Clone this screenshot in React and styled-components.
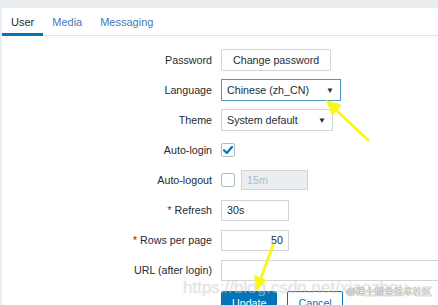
import { styled, createGlobalStyle } from "styled-components";

const GlobalStyle = createGlobalStyle`
  html, body {
    margin: 0;
    padding: 0;
    background: #ebeef0;
    overflow: hidden;
  }
  body {
    font-family: "Liberation Sans", Arial, sans-serif;
    font-size: 10.7px;
    color: #1f2c33;
  }
`;

const Page = styled.div`
  position: relative;
  width: 438px;
  height: 305px;
  padding: 8px 0 0 2px;
  box-sizing: border-box;
  overflow: hidden;
`;

const Panel = styled.div`
  background: #fff;
  height: 100%;
`;

const TabBar = styled.ul`
  display: flex;
  margin: 0;
  padding: 0;
  list-style: none;
  height: 28px;
  border-bottom: 1px solid #dfe4e7;
  box-sizing: border-box;
  font-size: 11px;
`;

const Tab = styled.li`
  display: flex;
  align-items: center;
  padding: 3px 9px 0;
  box-sizing: border-box;
  color: ${p => (p.$active ? "#1f2c33" : "#4579b8")};
  border-bottom: 3px solid ${p => (p.$active ? "#0275b8" : "transparent")};
  margin-bottom: -1px;
`;

const Form = styled.div`
  display: grid;
  grid-template-columns: 210px 1fr;
  grid-auto-rows: 30px;
  column-gap: 9px;
  align-items: center;
  padding-top: 9px;
`;

const Label = styled.div`
  text-align: right;
  white-space: nowrap;
`;

const Req = styled.span`
  color: #d40000;
  margin-right: 3px;
`;

const Field = styled.div`
  display: flex;
  align-items: center;
  gap: 6px;
  white-space: nowrap;
`;

const PlainButton = styled.button`
  height: 22px;
  padding: 0 11px;
  border: 1px solid #cfd5d8;
  border-radius: 2px;
  background: #fff;
  font: inherit;
  color: #1f2c33;
`;

const SelectBox = styled.div`
  display: flex;
  align-items: center;
  justify-content: space-between;
  width: ${p => p.$w}px;
  height: 22px;
  padding: 0 6px 0 5px;
  box-sizing: border-box;
  border: 1px solid ${p => (p.$focus ? "#4796c4" : "#cfd5d8")};
  background: #fff;
`;

const Caret = styled.span`
  font-size: 8px;
  color: #1f2c33;
`;

const Check = styled.span`
  display: inline-flex;
  align-items: center;
  justify-content: center;
  width: 14px;
  height: 14px;
  box-sizing: border-box;
  border: 1px solid #acbbc2;
  border-radius: 2px;
  background: #fff;
`;

const TextInput = styled.div`
  display: flex;
  align-items: center;
  justify-content: ${p => (p.$right ? "flex-end" : "flex-start")};
  width: ${p => p.$w}px;
  height: ${p => p.$h || 21}px;
  padding: 0 5px;
  box-sizing: border-box;
  border: 1px solid #cfd5d8;
  background: ${p => (p.$disabled ? "#ebeef0" : "#fff")};
  color: ${p => (p.$disabled ? "#acbbc2" : "#1f2c33")};
`;

const ButtonRow = styled.div`
  display: flex;
  gap: 10px;
  align-self: start;
  padding-top: 6px;
`;

const ActionButton = styled.button`
  height: 24px;
  padding: 0 10px;
  border: 1px solid #0275b8;
  border-radius: 2px;
  background: ${p => (p.$primary ? "#0275b8" : "#fff")};
  color: ${p => (p.$primary ? "#fff" : "#0275b8")};
  font: inherit;
`;

const Overlay = styled.svg`
  position: absolute;
  left: 0;
  top: 0;
  pointer-events: none;
`;

const WatermarkUrl = styled.div`
  position: absolute;
  left: 183px;
  top: 278px;
  font-size: 17px;
  color: rgba(255, 255, 255, 0.35);
  text-shadow: 0 0 1px rgba(120, 120, 120, 0.35);
  white-space: nowrap;
  pointer-events: none;
`;

const WatermarkSite = styled.div`
  position: absolute;
  left: 346px;
  top: 284px;
  font-size: 9.5px;
  font-family: "Liberation Sans", "Noto Sans CJK SC", sans-serif;
  color: rgba(255, 255, 255, 0.95);
  text-shadow: 0 0 1px #777, 0 0 1px #777;
  white-space: nowrap;
  pointer-events: none;
`;

function CheckMark() {
  return (
    <svg width="12" height="12" viewBox="0 0 12 12">
      <path d="M2 6.2 L4.8 9 L10 3" fill="none" stroke="#0275b8" strokeWidth="2.2" strokeLinecap="round" strokeLinejoin="round" />
    </svg>
  );
}

export default function App() {
  return (
    <Page>
      <GlobalStyle />
      <Panel>
        <TabBar>
          <Tab $active>User</Tab>
          <Tab>Media</Tab>
          <Tab>Messaging</Tab>
        </TabBar>
        <Form>
          <Label>Password</Label>
          <Field>
            <PlainButton>Change password</PlainButton>
          </Field>

          <Label>Language</Label>
          <Field>
            <SelectBox $w={120} $focus>
              <span>Chinese (zh_CN)</span>
              <Caret>▼</Caret>
            </SelectBox>
          </Field>

          <Label>Theme</Label>
          <Field>
            <SelectBox $w={112}>
              <span>System default</span>
              <Caret>▼</Caret>
            </SelectBox>
          </Field>

          <Label>Auto-login</Label>
          <Field>
            <Check><CheckMark /></Check>
          </Field>

          <Label>Auto-logout</Label>
          <Field>
            <Check />
            <TextInput $w={67} $h={20} $disabled>15m</TextInput>
          </Field>

          <Label><Req>*</Req>Refresh</Label>
          <Field>
            <TextInput $w={68}>30s</TextInput>
          </Field>

          <Label><Req>*</Req>Rows per page</Label>
          <Field>
            <TextInput $w={68} $right>50</TextInput>
          </Field>

          <Label>URL (after login)</Label>
          <Field>
            <TextInput $w={240} />
          </Field>

          <div />
          <ButtonRow>
            <ActionButton $primary>Update</ActionButton>
            <ActionButton>Cancel</ActionButton>
          </ButtonRow>
        </Form>
      </Panel>

      <WatermarkUrl>https://blog.csdn.net/xiaozhou</WatermarkUrl>
      <WatermarkSite>@稀土掘金技术社区</WatermarkSite>

      <Overlay width="438" height="305" viewBox="0 0 438 305">
        <line x1="368" y1="140" x2="334" y2="108" stroke="#f7f71e" strokeWidth="3" strokeLinecap="round" />
        <polygon points="326,100 342,105 332,116" fill="#f7f71e" />
        <line x1="273" y1="245" x2="261" y2="278" stroke="#f7f71e" strokeWidth="3" strokeLinecap="round" />
        <polygon points="256,291 267,280 254,275" fill="#f7f71e" />
      </Overlay>
    </Page>
  );
}
